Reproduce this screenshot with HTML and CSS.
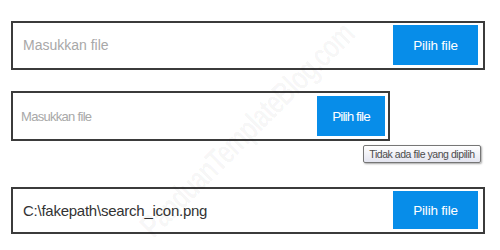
FILE: index.html
```html
<!DOCTYPE html>
<html lang="id">
<head>
<meta charset="utf-8">
<title>Input file</title>
<link rel="stylesheet" href="styles.css">
</head>
<body>
<div class="page">
  <div class="picker picker-lg">
    <span class="field placeholder">Masukkan file</span>
    <span class="btn">Pilih file</span>
  </div>
  <div class="picker picker-sm">
    <span class="field placeholder">Masukkan file</span>
    <span class="btn">Pilih file</span>
    <span class="tooltip">Tidak ada file yang dipilih</span>
  </div>
  <div class="picker picker-filled">
    <span class="field value">C:\fakepath\search_icon.png</span>
    <span class="btn">Pilih file</span>
  </div>
  <span class="watermark">PanduanTemplateBlog.com</span>
</div>
</body>
</html>
```

FILE: styles.css
```css
html, body {
  margin: 0;
  padding: 0;
  background: #ffffff;
}

body {
  font-family: "Liberation Sans", Arial, sans-serif;
}

.page {
  position: relative;
  width: 500px;
  height: 250px;
  padding: 21px 0 0 11px;
  box-sizing: border-box;
  overflow: hidden;
}

.picker {
  position: relative;
  display: flex;
  align-items: center;
  justify-content: space-between;
  box-sizing: border-box;
  border: 2px solid #3b3b3b;
  background: transparent;
}

.picker-lg {
  width: 474px;
  height: 49px;
  padding: 0 5px 1px 10px;
}

.picker-sm {
  width: 379px;
  height: 50px;
  margin-top: 21px;
  padding: 0 3px 0 8px;
}

.picker-filled {
  width: 474px;
  height: 47px;
  margin-top: 46px;
  padding: 0 5px 1px 10px;
}

.field {
  font-size: 14px;
}

.placeholder {
  color: #a8a8a8;
}

.value {
  color: #333333;
  font-size: 15px;
  letter-spacing: -0.25px;
}

.btn {
  display: flex;
  align-items: center;
  justify-content: center;
  width: 85px;
  height: 40px;
  background: #078de9;
  color: #ffffff;
  font-size: 13.5px;
  letter-spacing: -0.2px;
}

.picker-filled .btn {
  height: 38px;
}

.picker-sm .field {
  font-size: 13px;
  letter-spacing: -0.7px;
}

.picker-sm .btn {
  width: 68px;
  font-size: 13.5px;
  letter-spacing: -0.9px;
}

.tooltip {
  position: absolute;
  left: 350px;
  top: 52px;
  height: 18px;
  width: 118px;
  box-sizing: border-box;
  display: flex;
  align-items: center;
  justify-content: center;
  white-space: nowrap;
  border: 1px solid #767676;
  border-radius: 2px;
  background: linear-gradient(#ffffff, #e4e5f0);
  box-shadow: 1px 1px 2px rgba(0, 0, 0, 0.35);
  color: #4c4c4c;
  font-size: 10.5px;
  letter-spacing: -0.45px;
}

.watermark {
  position: absolute;
  left: 247px;
  top: 130px;
  transform: translate(-50%, -50%) rotate(-45deg) scale(0.8, 1.1);
  font-size: 30px;
  font-weight: bold;
  letter-spacing: -1.5px;
  color: rgba(0, 0, 0, 0.04);
  white-space: nowrap;
  pointer-events: none;
}
```
